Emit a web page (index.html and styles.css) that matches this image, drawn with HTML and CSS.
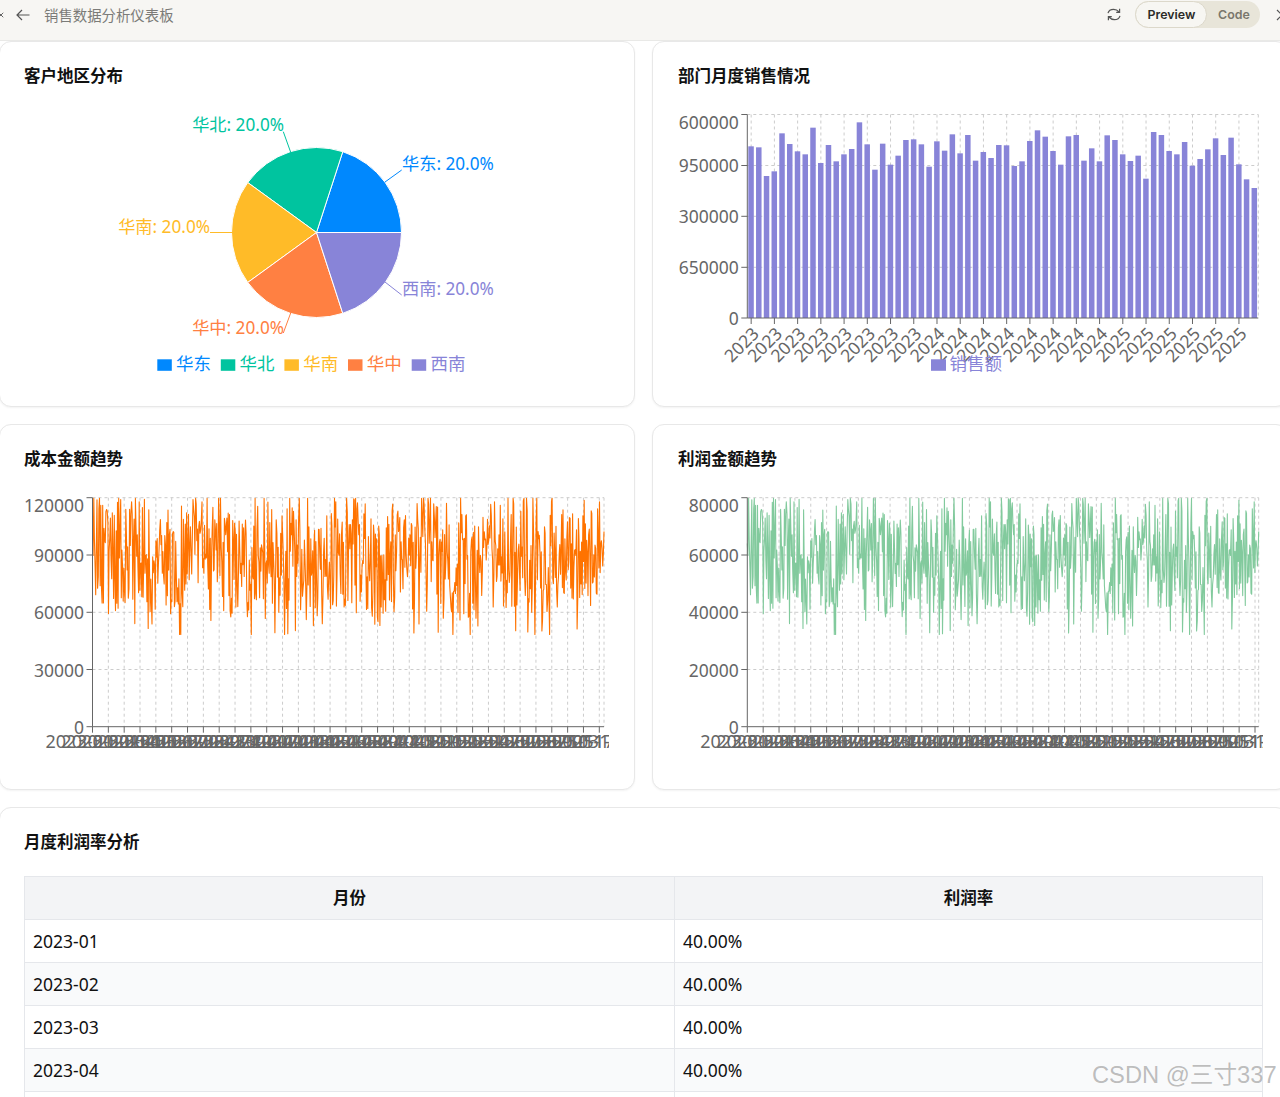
FILE: index.html
```html
<!DOCTYPE html>
<html lang="zh-CN">
<head>
<meta charset="utf-8">
<title>销售数据分析仪表板</title>
<link rel="stylesheet" href="styles.css">
</head>
<body>
<div class="page">
  <header class="toolbar">
    <div class="tool-left">
      <svg class="icon-close-cut" viewBox="0 0 8 8"><path d="M1 1l6 6M7 1L1 7"/></svg>
      <svg class="icon-back" viewBox="0 0 14 12"><path d="M13.5 6H1M6 1L1 6l5 5"/></svg>
      <span class="tool-title">销售数据分析仪表板</span>
    </div>
    <div class="tool-right">
      <svg class="icon-refresh" viewBox="0 0 14 13"><path d="M1 5.2C1.6 2.8 3.8 1.4 6.6 1.4c2.2 0 4 .9 5.6 2.6M12.6 .8v3.5H9.2M13 7.8c-.6 2.4-2.8 3.8-5.6 3.8-2.2 0-4-.9-5.6-2.6M1.4 12.2V8.7h3.4"/></svg>
      <div class="toggle">
        <span class="toggle-on">Preview</span>
        <span class="toggle-off">Code</span>
      </div>
      <svg class="icon-close" viewBox="0 0 12 12"><path d="M1 1l10 10M11 1L1 11"/></svg>
    </div>
  </header>
  <main class="dash">
    <section class="card">
      <h3 class="card-title">客户地区分布</h3>
      <svg class="chart" viewBox="24 106 585 276">
        <path class="s1" d="M316.5 232.5H401.5A85 85 0 0 0 342.77 151.66Z"/>
        <path class="s2" d="M316.5 232.5L342.77 151.66A85 85 0 0 0 247.73 182.54Z"/>
        <path class="s3" d="M316.5 232.5L247.73 182.54A85 85 0 0 0 247.73 282.46Z"/>
        <path class="s4" d="M316.5 232.5L247.73 282.46A85 85 0 0 0 342.77 313.34Z"/>
        <path class="s5" d="M316.5 232.5L342.77 313.34A85 85 0 0 0 401.5 232.5Z"/>
        <path class="lead l1" d="M385 182L401.7 170"/>
        <path class="lead l2" d="M290.7 152.3L283.3 131.7"/>
        <path class="lead l3" d="M233 232.5H210"/>
        <path class="lead l4" d="M290.7 313L283.3 333"/>
        <path class="lead l5" d="M385 282L401.7 295"/>
        <text class="lab lab-pie t1" x="402" y="163.9">华东: 20.0%</text>
        <text class="lab lab-pie t2 end" x="284" y="124.9">华北: 20.0%</text>
        <text class="lab lab-pie t3 end" x="210" y="226.9">华南: 20.0%</text>
        <text class="lab lab-pie t4 end" x="284" y="327.9">华中: 20.0%</text>
        <text class="lab lab-pie t5" x="402" y="288.9">西南: 20.0%</text>
        <rect class="s1" x="157.3" y="359.3" width="14.5" height="11.5"/><text class="lab t1" x="176" y="363.4">华东</text>
        <rect class="s2" x="220.8" y="359.3" width="14.5" height="11.5"/><text class="lab t2" x="239.5" y="363.4">华北</text>
        <rect class="s3" x="284.4" y="359.3" width="14.5" height="11.5"/><text class="lab t3" x="303.2" y="363.4">华南</text>
        <rect class="s4" x="348" y="359.3" width="14.5" height="11.5"/><text class="lab t4" x="366.7" y="363.4">华中</text>
        <rect class="s5" x="411.7" y="359.3" width="14.5" height="11.5"/><text class="lab t5" x="430.5" y="363.4">西南</text>
      </svg>
    </section>
    <section class="card">
      <h3 class="card-title">部门月度销售情况</h3>
      <svg class="chart" id="bar-chart" viewBox="678 106 585 276"></svg>
    </section>
    <section class="card">
      <h3 class="card-title">成本金额趋势</h3>
      <svg class="chart" id="cost-chart" viewBox="24 489 585 276"></svg>
    </section>
    <section class="card">
      <h3 class="card-title">利润金额趋势</h3>
      <svg class="chart" id="profit-chart" viewBox="678 489 585 276"></svg>
    </section>
    <section class="card card-wide">
      <h3 class="card-title">月度利润率分析</h3>
      <table class="data-table">
        <colgroup><col class="col-month"><col></colgroup>
        <thead><tr><th>月份</th><th>利润率</th></tr></thead>
        <tbody>
          <tr><td>2023-01</td><td>40.00%</td></tr>
          <tr><td>2023-02</td><td>40.00%</td></tr>
          <tr><td>2023-03</td><td>40.00%</td></tr>
          <tr><td>2023-04</td><td>40.00%</td></tr>
          <tr><td>2023-05</td><td>40.00%</td></tr>
        </tbody>
      </table>
    </section>
  </main>
  <div class="watermark">CSDN @三寸337</div>
</div>
<script src="charts.js"></script>
</body>
</html>
```
FILE: styles.css
```css
* { box-sizing: border-box; }
html, body { margin: 0; height: 100%; background: #fff; }
body { font-family: "Noto Sans", "Noto Sans CJK SC", sans-serif; color: #111; overflow: hidden; }
.page { position: relative; width: 1280px; height: 1097px; overflow: hidden; }

.toolbar { height: 41px; display: flex; justify-content: space-between; align-items: flex-start; background: #f7f6f3; border-bottom: 1px solid #e9e9e7; }
.tool-left { display: flex; align-items: center; height: 30px; }
.tool-right { display: flex; align-items: center; height: 29px; }
.toolbar svg { fill: none; stroke: #555; stroke-width: 1.2; }
.icon-close-cut { width: 6px; height: 6px; margin-left: -2px; stroke: #444; }
.icon-back { width: 14px; height: 12px; margin-left: 12px; }
.tool-title { margin-left: 14px; padding-bottom: 2px; font-size: 14.4px; color: #7b7b78; font-family: "Noto Sans CJK SC", sans-serif; }
.icon-refresh { width: 14px; height: 13px; margin-right: 14px; }
.toggle { display: flex; align-items: center; width: 125px; height: 27px; background: #e8e5d9; border-radius: 14px; font-family: Inter, sans-serif; font-size: 12.4px; font-weight: 600; }
.toggle-on { width: 72px; height: 27px; padding-left: 1px; display: flex; align-items: center; justify-content: center; background: #f7f6f2; border: 1px solid #dcd8ca; border-radius: 14px; color: #2b2b28; }
.toggle-off { margin-left: 11px; color: #7a776c; }
.icon-close { width: 12px; height: 12px; margin-left: 16px; margin-right: -8px; stroke: #444; }

.dash { display: grid; grid-template-columns: 636px 636px; column-gap: 17px; row-gap: 17px; width: 1289px; margin-left: -1px; }
.card { height: 366px; padding: 23px 24px 24px; background: #fff; border: 1px solid #e8e8e8; border-radius: 12px; box-shadow: 0 1px 2px rgba(0,0,0,.05); }
.card:nth-child(even) { padding-left: 25px; }
.card-wide { grid-column: 1 / 3; height: 400px; }
.card-title { margin: 0 0 19px; font-size: 16.5px; line-height: 22px; font-weight: 700; color: #111; }

.chart { display: block; width: 585px; height: 276px; overflow: hidden; font-family: "Noto Sans", "Noto Sans CJK SC", sans-serif; }
.chart .s1 { fill: #0088fe; } .chart .s2 { fill: #00c49f; } .chart .s3 { fill: #ffbb28; } .chart .s4 { fill: #ff8042; } .chart .s5 { fill: #8884d8; }
.chart path.s1, .chart path.s2, .chart path.s3, .chart path.s4, .chart path.s5 { stroke: #fff; stroke-width: 1; }
.lead { fill: none; stroke-width: 1; }
.l1 { stroke: #0088fe; } .l2 { stroke: #00c49f; } .l3 { stroke: #ffbb28; } .l4 { stroke: #ff8042; } .l5 { stroke: #8884d8; }
.lab { font-size: 17.5px; dominant-baseline: central; }
.lab-pie { font-size: 17.2px; }
.end { text-anchor: end; }
.t1 { fill: #0088fe; } .t2 { fill: #00c49f; } .t3 { fill: #ffbb28; } .t4 { fill: #ff8042; } .t5 { fill: #8884d8; }

.grid-line { stroke: #ccc; stroke-width: 1; stroke-dasharray: 3 3; fill: none; }
.axis-line { stroke: #666; stroke-width: 1; fill: none; }
.tick-label { font-size: 17.5px; fill: #666; dominant-baseline: central; }
.tick-y { text-anchor: end; }
.tick-x { text-anchor: middle; font-size: 18px; }
.tick-rot { text-anchor: end; }
.bar { fill: #8884d8; }
.trend { fill: none; stroke-width: 1.1; stroke-linejoin: round; }
.trend-cost { stroke: #ff7300; }
.trend-profit { stroke: #82ca9d; }

.data-table { width: 1239px; margin-top: 23px; table-layout: fixed; border-collapse: collapse; font-size: 17.5px; }
.col-month { width: 650px; }
.data-table th, .data-table td { height: 43px; padding: 0 8px; border: 1px solid #e5e7eb; text-align: left; font-weight: 400; line-height: 24px; }
.data-table th { background: #f3f4f6; text-align: center; font-weight: 700; font-size: 16.5px; color: #111; }
.data-table tbody tr:nth-child(even) td { background: #f9fafb; }

.watermark { position: absolute; left: 1092px; top: 1060px; font-family: "Liberation Sans", "Noto Sans CJK SC", sans-serif; font-size: 23.7px; line-height: 30px; white-space: nowrap; color: rgba(125,125,125,.52); text-shadow: 0 0 1px rgba(255,255,255,.9); }
```
FILE: charts.js
```js
(function () {
  var NS = 'http://www.w3.org/2000/svg';
  function el(parent, tag, attrs, text) {
    var n = document.createElementNS(NS, tag);
    Object.keys(attrs).forEach(function (k) { n.setAttribute(k, attrs[k]); });
    if (text !== undefined) n.textContent = text;
    parent.appendChild(n);
    return n;
  }
  function line(svg, cls, x1, y1, x2, y2) {
    el(svg, 'line', { 'class': cls, x1: x1, y1: y1, x2: x2, y2: y2 });
  }

  /* ---------- bar chart ---------- */
  var topsA = [139,142,228,214,100,132,154,163,83,189,135,184,163,147,67,133,209,131,194,167,120,118,133,200,124,152,103,160,105];
  var topsB = [182,156,174,135,136,198,184,123,91,110,153,194,109,105,182,145,184,106,120,163,183,167,236,96,105,153,163,126,197,177,148,115,165,113,193,238,264];
  var tops = topsA.concat(topsB);
  var bar = document.getElementById('bar-chart');
  var bx0 = 747.3, bx1 = 1258.3, by0 = 114.5, by1 = 318, band = (bx1 - bx0) / 66;
  var hTicks = [[114.5, 122, '600000'], [165.5, 165, '950000'], [216.3, 216, '300000'], [267.3, 267, '650000'], [318, 318, '0']];
  var xt = [];
  for (var i = 0; i < 22; i++) xt.push(bx0 + (i * 3 + 0.5) * band);
  hTicks.forEach(function (t) { if (t[0] !== by1) line(bar, 'grid-line', bx0, t[0], bx1, t[0]); });
  xt.forEach(function (x) { line(bar, 'grid-line', x, by0, x, by1); });
  line(bar, 'grid-line', bx1, by0, bx1, by1);
  tops.forEach(function (z, idx) {
    var y = 100 + z / 3;
    el(bar, 'rect', { 'class': 'bar', x: bx0 + idx * band + 1, y: y, width: 5.5, height: by1 - y });
  });
  line(bar, 'axis-line', bx0, by0, bx0, by1);
  line(bar, 'axis-line', bx0, by1, bx1, by1);
  hTicks.forEach(function (t) {
    line(bar, 'axis-line', bx0 - 6, t[0], bx0, t[0]);
    el(bar, 'text', { 'class': 'tick-label tick-y', x: bx0 - 8.5, y: t[1] }, t[2]);
  });
  xt.forEach(function (x, k) {
    line(bar, 'axis-line', x, by1, x, by1 + 6);
    var year = k < 8 ? '2023' : k < 16 ? '2024' : '2025';
    el(bar, 'text', { 'class': 'tick-label tick-rot', x: x + 4, y: 330, transform: 'rotate(-45 ' + (x + 4) + ' 330)' }, year);
  });
  el(bar, 'rect', { 'class': 's5', x: 931, y: 359.3, width: 15, height: 11.5 });
  el(bar, 'text', { 'class': 'lab t5', x: 949.5, y: 363.4 }, '销售额');

  /* ---------- trend series (same pixel shape in both charts: profit is a fixed share of cost) ---------- */
  var seed = 20230101;
  function rnd() { seed = (seed * 1664525 + 1013904223) % 4294967296; return seed / 4294967296; }
  var N = 800, series = [];
  for (var p = 0; p < N; p++) {
    var t = p / N;
    var c = 0.54 + 0.07 * Math.sin(t * 41) + 0.05 * Math.sin(t * 97 + 1);
    var spread = rnd() < 0.3 ? 1.15 : 0.78;
    var v = c + (rnd() - 0.5) * spread;
    series.push(Math.min(0.995, Math.max(0.005, v)));
  }

  function trend(id, cls, x0, x1, lastTick, labels) {
    var svg = document.getElementById(id);
    var yTop = 497.7, yBot = 726.7;
    var ys = [[497.7, 505, labels[0]], [555, 555, labels[1]], [612.3, 612, labels[2]], [669.5, 669.5, labels[3]], [726.7, 726.5, '0']];
    var ticks = [], count = 33, stepX = (lastTick - x0) / (count - 1);
    for (var i = 0; i < count; i++) ticks.push(x0 + i * stepX);
    ys.forEach(function (t) { if (t[0] !== yBot) line(svg, 'grid-line', x0, t[0], x1, t[0]); });
    ticks.forEach(function (x) { if (x !== x0) line(svg, 'grid-line', x, yTop, x, yBot); });
    line(svg, 'grid-line', x1, yTop, x1, yBot);

    var d = series.map(function (v, idx) {
      var x = x0 + (x1 - x0) * idx / (N - 1);
      var y = yBot - (yBot - yTop) * (0.4 + v * 0.6);
      return (idx ? 'L' : 'M') + x.toFixed(1) + ' ' + y.toFixed(1);
    }).join('');
    el(svg, 'path', { 'class': 'trend ' + cls, d: d });

    line(svg, 'axis-line', x0, yTop, x0, yBot);
    line(svg, 'axis-line', x0, yBot, x1, yBot);
    ys.forEach(function (t) {
      line(svg, 'axis-line', x0 - 6, t[0], x0, t[0]);
      el(svg, 'text', { 'class': 'tick-label tick-y', x: x0 - 8.5, y: t[1] }, t[2]);
    });
    var date = new Date(Date.UTC(2023, 0, 1));
    ticks.forEach(function (x) {
      line(svg, 'axis-line', x, yBot, x, yBot + 6);
      el(svg, 'text', { 'class': 'tick-label tick-x', x: x, y: 741 }, date.toISOString().slice(0, 10));
      date = new Date(date.getTime() + 34 * 86400000);
    });
  }
  trend('cost-chart', 'trend-cost', 92.5, 604, 599.3, ['120000', '90000', '60000', '30000']);
  trend('profit-chart', 'trend-profit', 747.3, 1258.7, 1255, ['80000', '60000', '40000', '20000']);
})();
```
